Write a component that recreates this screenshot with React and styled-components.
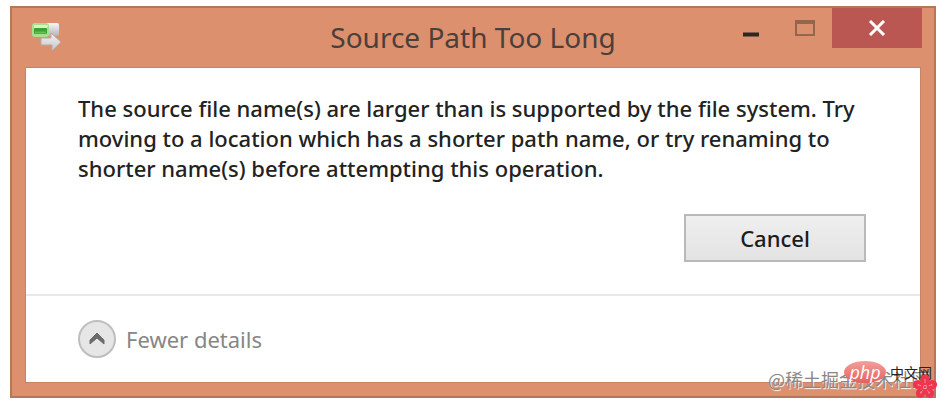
import React from "react";
import styled, { createGlobalStyle } from "styled-components";

const GlobalStyle = createGlobalStyle`
  * { box-sizing: border-box; }
  body {
    margin: 0;
    background: #fff;
    font-family: "Noto Sans", "Open Sans", sans-serif;
  }
`;

const Page = styled.main`
  padding: 6px 6px 6px 10px;
`;

const Dialog = styled.section`
  position: relative;
  padding: 0 13px 13px;
  border: 2px solid #b5775a;
  background: #dc906e;
`;

const TitleBar = styled.header`
  display: grid;
  grid-template-columns: 1fr auto 1fr;
  height: 59px;
`;

const AppIcon = styled.svg`
  width: 36px;
  height: 32px;
  margin: 12px 0 0 4px;
`;

const Title = styled.h1`
  margin: 0;
  color: #4a3f3a;
  font-size: 28px;
  font-weight: 400;
  line-height: 58px;
`;

const WindowControls = styled.div`
  display: flex;
  justify-content: flex-end;
  margin-right: -1px;
`;

const WindowButton = styled.button`
  display: flex;
  align-items: center;
  justify-content: center;
  width: ${(p) => (p.$close ? 90 : 54)}px;
  height: 40px;
  padding: 0;
  border: 0;
  background: ${(p) => (p.$close ? "#bb5753" : "transparent")};
`;

const Client = styled.div`
  border: 1px solid #c48468;
  background: #fff;
`;

const Body = styled.div`
  display: flex;
  flex-direction: column;
  gap: 31px;
  padding: 25px 54px 32px 52px;
`;

const Message = styled.p`
  margin: 0;
  color: #222;
  font-size: 22px;
  font-weight: 500;
  line-height: 30px;
`;

const CancelButton = styled.button`
  align-self: flex-end;
  width: 182px;
  height: 48px;
  padding: 0;
  border: 2px solid #b9b9b9;
  background: linear-gradient(#efefef, #e3e3e3);
  color: #1c1c1c;
  font-family: inherit;
  font-size: 22px;
  font-weight: 500;
`;

const Footer = styled.footer`
  padding: 24px 52px;
  border-top: 2px solid #e8e8e8;
`;

const DetailsToggle = styled.button`
  display: flex;
  align-items: center;
  gap: 10px;
  height: 38px;
  padding: 0;
  border: 0;
  background: none;
  color: #868686;
  font-family: inherit;
  font-size: 22px;
`;

const ToggleIcon = styled.svg`
  width: 38px;
  height: 38px;
`;

const Watermark = styled.div`
  position: absolute;
  right: 5px;
  bottom: 5px;
  color: #8b8583;
  font-family: "Noto Sans CJK SC", sans-serif;
  font-size: 18px;
  line-height: 24px;
  white-space: nowrap;
  text-shadow: 1px 1px 1px #fff;
`;

const SiteBadge = styled.div`
  position: absolute;
  right: 2px;
  bottom: 13px;
  display: flex;
  align-items: center;
  gap: 4px;
`;

const PhpMark = styled.span`
  display: flex;
  align-items: center;
  justify-content: center;
  width: 42px;
  height: 22px;
  border-radius: 50%;
  background: linear-gradient(#f2a09c, #e5605e);
  color: #fff;
  font: italic 18px/18px "Open Sans", sans-serif;
`;

const SiteName = styled.span`
  color: #2b2020;
  font: 14px/20px "Noto Sans CJK SC", sans-serif;
`;

const Flower = styled.svg`
  position: absolute;
  right: -4px;
  bottom: -4px;
  width: 26px;
  height: 26px;
`;

const petals = [0, 72, 144, 216, 288];

export default function App() {
  return (
    <>
      <GlobalStyle />
      <Page>
        <Dialog aria-labelledby="dialog-title">
          <TitleBar>
            <AppIcon viewBox="0 0 36 32" aria-hidden="true">
              <defs>
                <linearGradient id="drive" x2="0" y2="1">
                  <stop stopColor="#f7f7f7" />
                  <stop offset="1" stopColor="#b4b4b4" />
                </linearGradient>
                <linearGradient id="arrow" x2="0" y2="1">
                  <stop stopColor="#f4f4f4" />
                  <stop offset="1" stopColor="#c5c5c5" />
                </linearGradient>
              </defs>
              <rect x="14" y="3" width="16" height="13" rx="2" fill="url(#drive)" />
              <rect x="3" y="3" width="17" height="14" rx="3" fill="#a5e08e" />
              <path d="M5 5h14l-1 3H5z" fill="#d6f5c7" />
              <rect x="5" y="8" width="13" height="6" rx="1" fill="#3d9f36" />
              <path d="M6 12.5h11" stroke="#66bf50" strokeWidth="2" />
              <path d="M12 18h10v-5l10 9-9 9v-6H12z" fill="url(#arrow)" stroke="#b5aaa4" />
            </AppIcon>
            <Title id="dialog-title">Source Path Too Long</Title>
            <WindowControls>
              <WindowButton aria-label="Minimize">
                <svg width="18" height="18" viewBox="0 0 18 18"><path d="M1 15.5h16" stroke="#2b2725" strokeWidth="4" /></svg>
              </WindowButton>
              <WindowButton aria-label="Maximize" disabled>
                <svg width="20" height="16" viewBox="0 0 20 16"><path d="M1 1h18v14H1zM1 3h18" fill="none" stroke="#946650" strokeWidth="2" /></svg>
              </WindowButton>
              <WindowButton $close aria-label="Close">
                <svg width="18" height="16" viewBox="0 0 18 16"><path d="M2 1l14 14M16 1L2 15" stroke="#fff" strokeWidth="3" /></svg>
              </WindowButton>
            </WindowControls>
          </TitleBar>
          <Client>
            <Body>
              <Message>
                The source file name(s) are larger than is supported by the file system. Try
                moving to a location which has a shorter path name, or try renaming to
                shorter name(s) before attempting this operation.
              </Message>
              <CancelButton>Cancel</CancelButton>
            </Body>
            <Footer>
              <DetailsToggle aria-expanded="true">
                <ToggleIcon viewBox="0 0 38 38" aria-hidden="true">
                  <circle cx="19" cy="19" r="18" fill="#e6e6e6" stroke="#bebebe" strokeWidth="2" />
                  <path d="M12 24v-4l7-7 7 7v4l-7-6z" fill="#6c6c6c" stroke="#6c6c6c" />
                </ToggleIcon>
                Fewer details
              </DetailsToggle>
            </Footer>
          </Client>
          <Watermark>@稀土掘金技术社区</Watermark>
          <SiteBadge>
            <PhpMark>php</PhpMark>
            <SiteName>中文网</SiteName>
          </SiteBadge>
          <Flower viewBox="-13 -13 26 26" aria-hidden="true">
            {petals.map((angle) => (
              <g key={angle} transform={`rotate(${angle})`}>
                <ellipse cy="-7.5" rx="4.6" ry="5" fill="#f0344e" />
                <path d="M0 -3V-6" fill="none" stroke="#f8a0a8" strokeWidth=".8" />
                <circle cy="-7" r=".8" fill="#f8a0a8" />
              </g>
            ))}
            <circle r="3" fill="none" stroke="#f0344e" strokeWidth="2" />
            <circle r="1.6" fill="#f0344e" stroke="#f8a0a8" strokeWidth=".7" />
          </Flower>
        </Dialog>
      </Page>
    </>
  );
}
